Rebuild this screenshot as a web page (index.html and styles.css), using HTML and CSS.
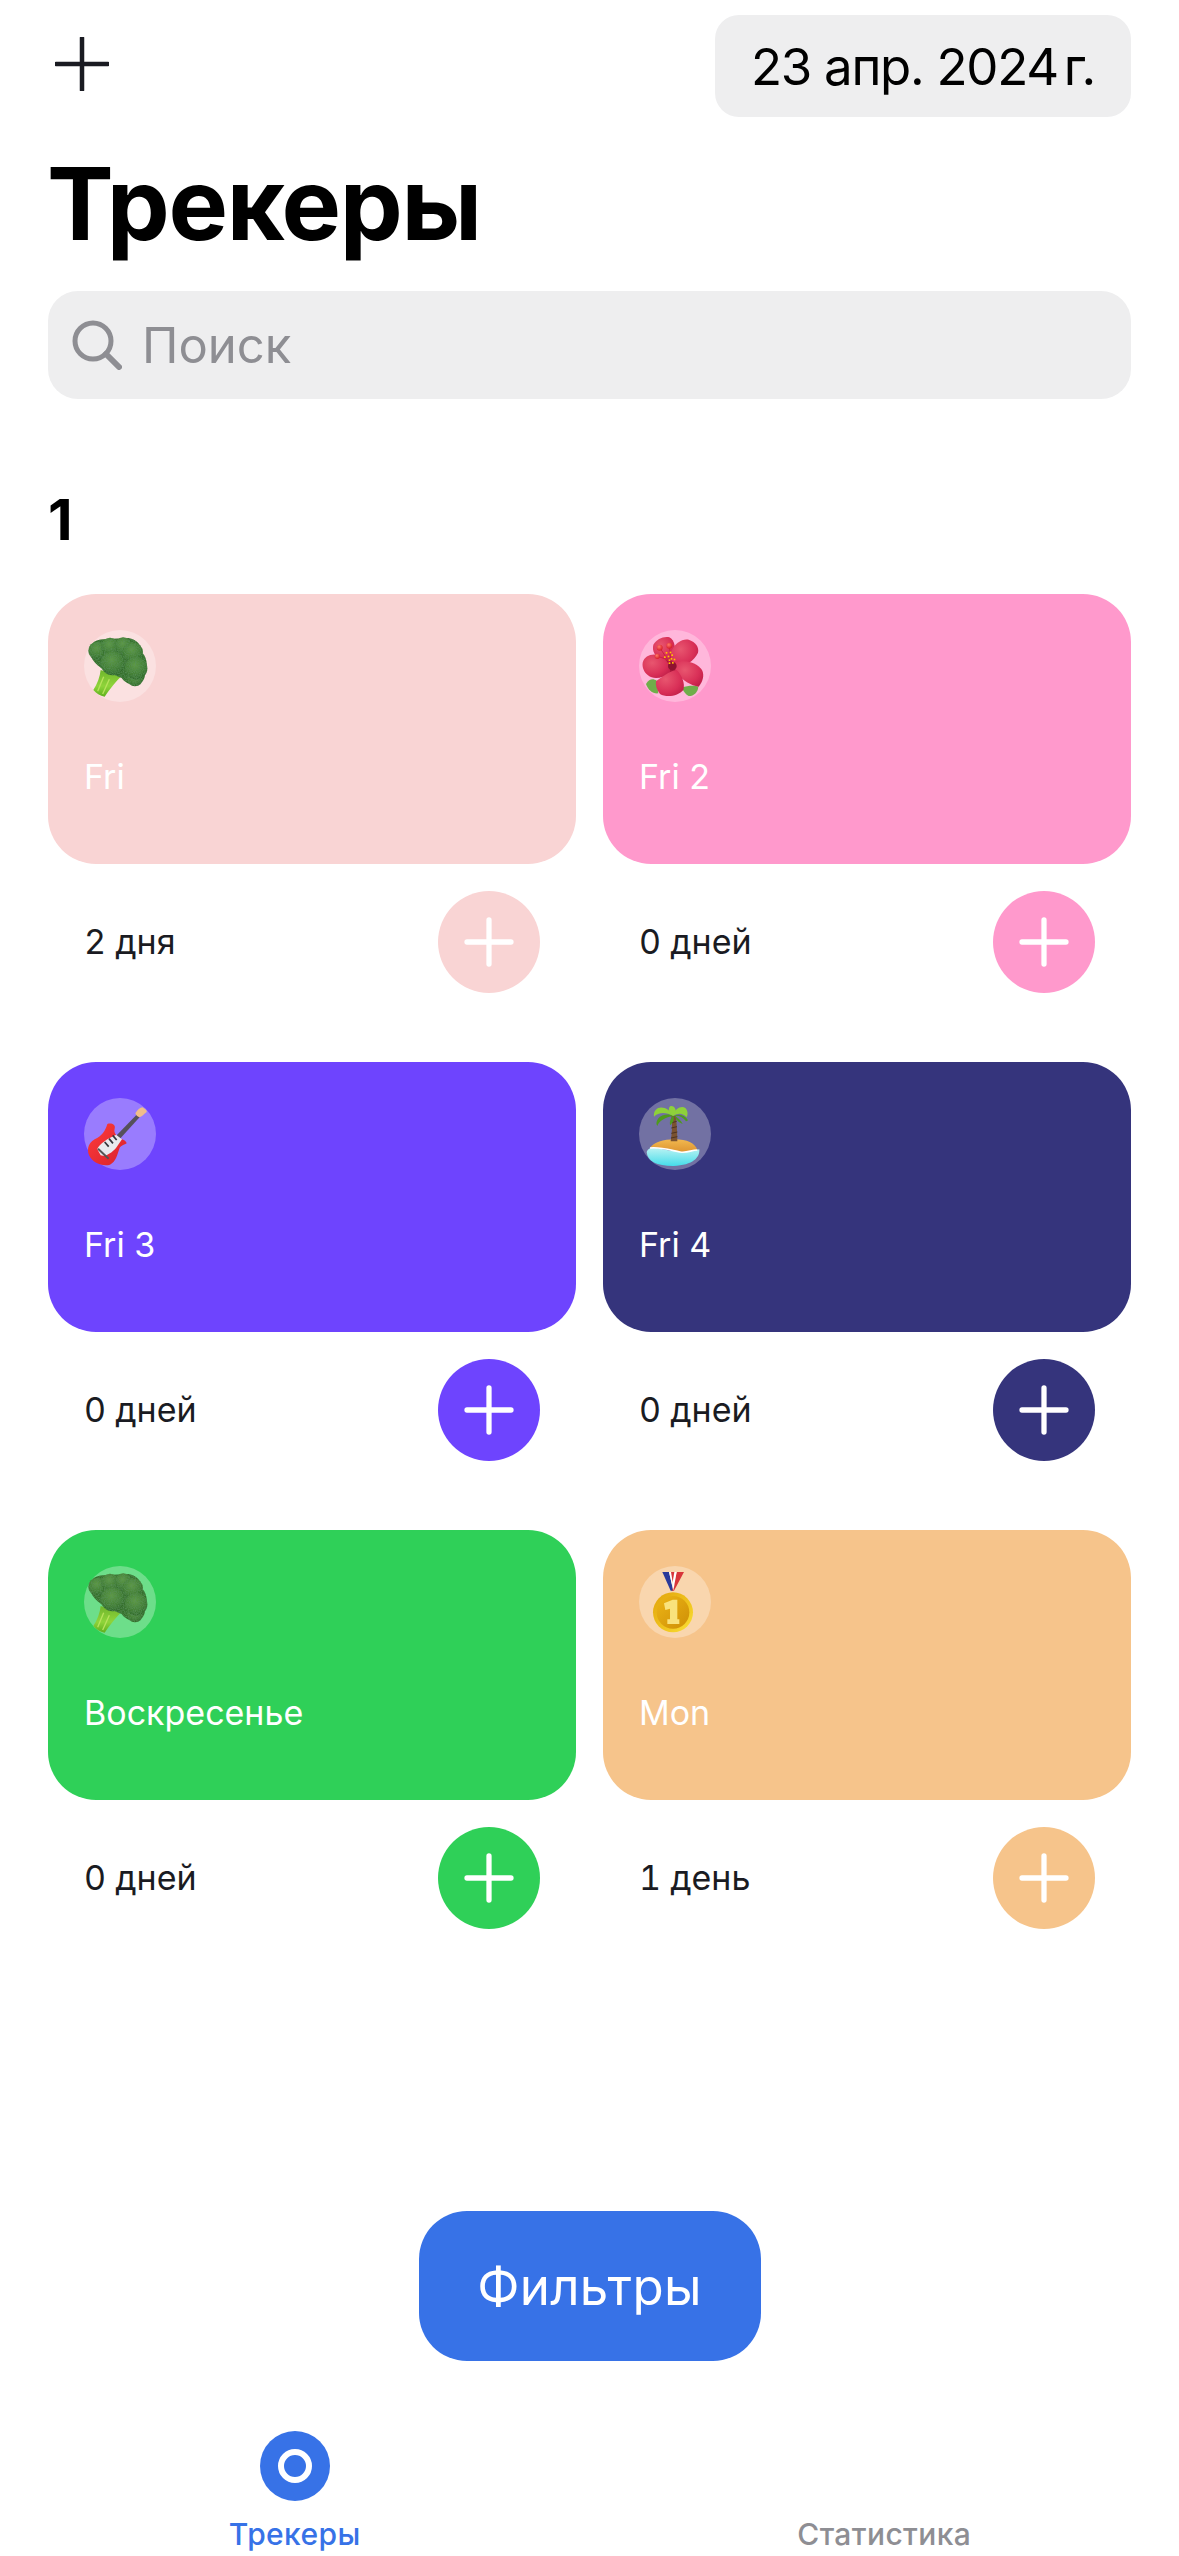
FILE: index.html
```html
<!DOCTYPE html>
<html lang="ru">
<head>
<meta charset="utf-8">
<title>Трекеры</title>
<link rel="stylesheet" href="styles.css">
</head>
<body>
<svg class="defs" width="0" height="0" aria-hidden="true">
  <defs>
    <radialGradient id="flo" cx="45%" cy="35%" r="70%"><stop offset="0" stop-color="#5f9a46"/><stop offset=".6" stop-color="#437f35"/><stop offset="1" stop-color="#2c6428"/></radialGradient>
    <linearGradient id="stem" x1="0" y1="0" x2="0" y2="1"><stop offset="0" stop-color="#6fb52c"/><stop offset=".6" stop-color="#8fd43a"/><stop offset="1" stop-color="#5fb01e"/></linearGradient>
    <filter id="bump" x="-5%" y="-5%" width="110%" height="110%"><feTurbulence type="fractalNoise" baseFrequency=".28" numOctaves="2" result="n"/><feColorMatrix in="n" type="matrix" values="0 0 0 0 0.1  0 0 0 0 0.28  0 0 0 0 0.1  0 0 0 1.6 -0.55" result="d"/><feComposite in="d" in2="SourceAlpha" operator="in" result="t"/><feMerge><feMergeNode in="SourceGraphic"/><feMergeNode in="t"/></feMerge></filter>
    <radialGradient id="pet" cx="35%" cy="35%" r="85%"><stop offset="0" stop-color="#e8566f"/><stop offset=".6" stop-color="#d92f57"/><stop offset="1" stop-color="#b81a44"/></radialGradient>
    <radialGradient id="ball" cx="40%" cy="35%" r="60%"><stop offset="0" stop-color="#ff7a6a"/><stop offset="1" stop-color="#d9232c"/></radialGradient>
    <linearGradient id="gbody" x1="0" y1="0" x2="1" y2="1"><stop offset="0" stop-color="#ff3b3b"/><stop offset="1" stop-color="#d8222c"/></linearGradient>
    <linearGradient id="sand" x1="0" y1="0" x2="0" y2="1"><stop offset="0" stop-color="#f2b84f"/><stop offset="1" stop-color="#dd9430"/></linearGradient>
    <linearGradient id="sea" x1="0" y1="0" x2="0" y2="1"><stop offset="0" stop-color="#bdf3f3"/><stop offset="1" stop-color="#45dcea"/></linearGradient>
    <linearGradient id="gold" x1="0" y1="0" x2="1" y2="1"><stop offset="0" stop-color="#e2a40e"/><stop offset=".6" stop-color="#f0c51e"/><stop offset="1" stop-color="#fbe33a"/></linearGradient>
    <linearGradient id="goldin" x1="0" y1="0" x2="1" y2="1"><stop offset="0" stop-color="#ecb516"/><stop offset="1" stop-color="#cf8f06"/></linearGradient>
    <symbol id="broccoli" viewBox="72 60 216 216">
      <path d="M122 180L182 200C170 212 150 236 134 260C120 258 108 250 100 240C112 222 120 200 122 180Z" fill="url(#stem)"/>
      <path d="M131 200L113 244M148 208L128 252" stroke="#b7e25c" stroke-width="4" fill="none"/>
      <g fill="url(#flo)" filter="url(#bump)">
        <path d="M88 120C92 98 110 88 130 88L205 84C230 88 245 105 248 130C262 145 264 175 255 192C256 210 240 226 222 224C205 224 192 214 185 204L140 185C115 170 90 150 88 120Z" fill="#356f2b"/>
        <circle cx="225" cy="205" r="24"/><circle cx="112" cy="122" r="27"/><circle cx="150" cy="110" r="27"/>
        <circle cx="190" cy="108" r="26"/><circle cx="218" cy="128" r="31"/><circle cx="228" cy="175" r="34"/>
        <circle cx="158" cy="160" r="36"/>
      </g>
    </symbol>
  </defs>
</svg>
<div class="app">
  <header class="topbar">
    <svg class="add" viewBox="0 0 54 54"><path d="M27 1V53M1 27H53" stroke="#1a1b22" stroke-width="4.5" stroke-linecap="round"/></svg>
    <div class="date">23 апр. 2024<span class="year">г.</span></div>
  </header>
  <h1 class="title">Трекеры</h1>
  <div class="search">
    <svg class="search-icon" viewBox="0 0 50 50"><circle cx="21" cy="21" r="18" fill="none" stroke="#8e8e93" stroke-width="5"/><path d="M34 34L47 47" stroke="#8e8e93" stroke-width="6" stroke-linecap="round"/></svg>
    <span class="search-text">Поиск</span>
  </div>
  <h2 class="section">1</h2>
  <main class="grid">
    <article class="tracker c-rose">
      <div class="card"><div class="emoji"><svg viewBox="0 0 72 72"><use href="#broccoli"/></svg></div><div class="name">Fri</div></div>
      <div class="foot"><span class="days">2 дня</span><span class="plus"><svg viewBox="0 0 46 46"><path d="M23 0V46M0 23H46" stroke="#fff" stroke-width="5.5" stroke-linecap="round"/></svg></span></div>
    </article>
    <article class="tracker c-pink">
      <div class="card"><div class="emoji"><svg viewBox="57 60 216 216">
        <path d="M78 222C88 205 100 205 110 212L115 250C98 252 84 240 78 222Z" fill="#6fae4a"/>
        <path d="M186 232C205 226 225 226 235 230C234 246 222 258 206 258C198 254 190 246 186 232Z" fill="#6fae4a"/>
        <circle cx="157" cy="170" r="42" fill="#a9163c"/>
        <path d="M100 104C110 88 130 78 148 82C164 90 170 116 160 150C140 156 116 148 104 132C98 122 98 112 100 104Z" fill="url(#pet)"/>
        <path d="M156 120C166 98 190 84 208 90C226 96 238 112 234 128C222 152 196 172 162 172C152 152 150 136 156 120Z" fill="url(#pet)"/>
        <path d="M68 158C74 136 100 128 120 138C140 148 154 168 150 186C130 206 100 210 84 196C72 186 66 172 68 158Z" fill="url(#pet)"/>
        <path d="M166 158C200 146 232 160 246 180C254 196 248 216 236 230C214 228 186 210 170 190C164 178 164 168 166 158Z" fill="url(#pet)"/>
        <path d="M108 214C124 202 150 182 170 180C186 196 196 220 190 240C176 258 140 264 120 252C110 240 106 226 108 214Z" fill="url(#pet)"/>
        <circle cx="157" cy="168" r="13" fill="#8f1230"/>
        <path d="M150 160L120 114M152 150L148 108M140 148L113 139" stroke="#c81f45" stroke-width="3"/>
        <circle cx="119" cy="113" r="9" fill="url(#ball)"/><circle cx="148" cy="107" r="9" fill="url(#ball)"/><circle cx="112" cy="139" r="8" fill="url(#ball)"/>
        <g fill="#ffc400"><rect x="137" y="126" width="5" height="5"/><rect x="149" y="125" width="5" height="5"/><rect x="154" y="133" width="5" height="5"/><rect x="132" y="139" width="5" height="5"/><rect x="143" y="137" width="5" height="5"/><rect x="152" y="144" width="5" height="5"/><rect x="161" y="146" width="5" height="5"/><rect x="146" y="148" width="5" height="5"/><rect x="156" y="156" width="5" height="5"/><rect x="146" y="157" width="5" height="5"/></g>
      </svg></div><div class="name">Fri 2</div></div>
      <div class="foot"><span class="days">0 дней</span><span class="plus"><svg viewBox="0 0 46 46"><path d="M23 0V46M0 23H46" stroke="#fff" stroke-width="5.5" stroke-linecap="round"/></svg></span></div>
    </article>
    <article class="tracker c-purple">
      <div class="card"><div class="emoji"><svg viewBox="72 54 216 216">
        <path d="M170 166L232 102L240 110L180 176Z" fill="#55505a"/>
        <path d="M226 100C232 90 240 82 248 82C252 86 262 90 260 96C252 102 246 110 238 112C232 110 228 106 226 100Z" fill="#f0bd8a"/>
        <path d="M142 132C152 128 168 132 164 146C160 158 170 168 182 176C190 178 200 184 200 190C190 196 180 198 178 206C172 224 168 244 150 254C130 260 104 250 92 234C78 216 82 190 104 178C126 168 136 152 142 132Z" fill="url(#gbody)"/>
        <path d="M168 164L186 178L168 204C156 218 136 232 122 226L112 208C116 196 128 188 142 178C150 172 160 170 168 164Z" fill="#e9e9ee"/>
        <g stroke="#33333a" stroke-width="5"><path d="M134 186L146 200"/><path d="M147 176L159 190"/><path d="M158 166L170 180"/></g>
        <path d="M114 206L146 236" stroke="#555" stroke-width="6"/>
      </svg></div><div class="name">Fri 3</div></div>
      <div class="foot"><span class="days">0 дней</span><span class="plus"><svg viewBox="0 0 46 46"><path d="M23 0V46M0 23H46" stroke="#fff" stroke-width="5.5" stroke-linecap="round"/></svg></span></div>
    </article>
    <article class="tracker c-navy">
      <div class="card"><div class="emoji"><svg viewBox="57 54 216 216">
        <path d="M80 216C84 204 96 200 110 204C150 214 200 218 238 208C240 232 220 256 160 258C110 258 82 244 80 216Z" fill="url(#sea)"/>
        <path d="M90 204C100 188 130 178 165 178C200 178 226 190 232 210C214 210 200 220 180 216C150 210 118 200 90 204Z" fill="url(#sand)"/>
        <path d="M90 204C118 200 150 210 180 216C200 220 214 210 232 210" fill="none" stroke="#fff" stroke-width="5"/>
        <path d="M154 108C160 108 165 108 168 110C170 132 172 160 172 184L152 184C156 160 158 132 154 108Z" fill="#7a5230"/>
        <path d="M156 128L170 124M154 144L171 140M154 160L172 156M153 174L172 170" stroke="#4d3320" stroke-width="3"/>
        <g fill="#4e9a1c"><path d="M160 108C146 100 124 104 114 116C108 126 108 132 112 138C118 122 136 112 160 108Z"/><path d="M160 108C176 100 194 106 202 118C204 122 204 124 198 124C190 112 178 106 160 108Z"/><path d="M160 106C152 114 148 124 150 136C160 128 164 118 160 106Z"/><path d="M164 106C172 114 184 122 188 132C176 128 166 118 164 106Z"/></g>
        <g fill="#8ed13a"><path d="M160 108C150 88 130 78 114 84C104 90 100 100 102 110C116 96 138 96 160 108Z"/><path d="M160 108C164 86 184 76 196 84C204 92 204 104 200 112C188 98 174 98 160 108Z"/><path d="M160 108C146 98 142 84 152 78C162 76 168 86 168 98Z"/></g>
      </svg></div><div class="name">Fri 4</div></div>
      <div class="foot"><span class="days">0 дней</span><span class="plus"><svg viewBox="0 0 46 46"><path d="M23 0V46M0 23H46" stroke="#fff" stroke-width="5.5" stroke-linecap="round"/></svg></span></div>
    </article>
    <article class="tracker c-green">
      <div class="card"><div class="emoji"><svg viewBox="0 0 72 72"><use href="#broccoli"/></svg></div><div class="name">Воскресенье</div></div>
      <div class="foot"><span class="days">0 дней</span><span class="plus"><svg viewBox="0 0 46 46"><path d="M23 0V46M0 23H46" stroke="#fff" stroke-width="5.5" stroke-linecap="round"/></svg></span></div>
    </article>
    <article class="tracker c-orange">
      <div class="card"><div class="emoji"><svg viewBox="57 48 216 216">
        <path d="M127 66H147L160 122H152Z" fill="#2a3a9a"/><path d="M192 66H170L156 122H162Z" fill="#d8353a"/><path d="M147 66H156L158 106L160 122Z" fill="#fff"/><path d="M160 66H170L160 122L158 100Z" fill="#fff"/><path d="M153 66H163L158 96Z" fill="#d8353a"/>
        <circle cx="159" cy="187" r="60" fill="url(#gold)"/>
        <circle cx="159" cy="187" r="49" fill="url(#goldin)"/>
        <path d="M132 160L158 149H172V208H178V222H142V208H150V176L136 180Z" fill="#f9e27c"/>
      </svg></div><div class="name">Mon</div></div>
      <div class="foot"><span class="days">1 день</span><span class="plus"><svg viewBox="0 0 46 46"><path d="M23 0V46M0 23H46" stroke="#fff" stroke-width="5.5" stroke-linecap="round"/></svg></span></div>
    </article>
  </main>
  <div class="filter-wrap"><button class="filter">Фильтры</button></div>
  <nav class="tabs">
    <div class="tab active">
      <svg class="tab-icon" viewBox="0 0 70 70"><circle cx="35" cy="35" r="35" fill="#3772e7"/><circle cx="35" cy="35" r="14" fill="none" stroke="#fff" stroke-width="6"/></svg>
      <span class="tab-label">Трекеры</span>
    </div>
    <div class="tab">
      <span class="tab-icon"></span>
      <span class="tab-label">Статистика</span>
    </div>
  </nav>
</div>
</body>
</html>
```
FILE: styles.css
```css
* { box-sizing: border-box; }
html, body { margin: 0; padding: 0; background: #fff; }
body { width: 1179px; height: 2556px; overflow: hidden; font-family: Inter, "Liberation Sans", sans-serif; color: #1a1b22; }
.defs { position: absolute; }
.app { width: 1179px; height: 2556px; display: flex; flex-direction: column; padding: 15px 48px 0; }

.topbar { display: flex; justify-content: space-between; align-items: center; height: 102px; }
.add { width: 54px; height: 54px; margin-left: 7px; margin-top: -4px; }
.date { height: 102px; width: 416px; background: #eeeeef; border-radius: 24px; display: flex; align-items: center; justify-content: center; font-size: 51px; color: #000; letter-spacing: -1.3px; }
.year { margin-left: 6px; }

.title { margin: 37px 0 0 -1px; font-size: 100px; line-height: 100px; font-weight: 700; color: #000; letter-spacing: -1.3px; }

.search { margin-top: 37px; height: 108px; background: #eeeeef; border-radius: 30px; display: flex; align-items: center; padding-left: 24px; gap: 20px; }
.search-icon { width: 50px; height: 50px; }
.search-text { font-size: 49px; color: #8e8e93; }

.section { margin: 86px 0 0; font-size: 57px; line-height: 70px; font-weight: 700; color: #000; }

.grid { margin-top: 39px; display: grid; grid-template-columns: 528px 528px; column-gap: 27px; row-gap: 48px; }
.tracker { height: 420px; }
.card { height: 270px; border-radius: 48px; padding: 36px 36px 0; color: #fff; }
.emoji { width: 72px; height: 72px; border-radius: 50%; background: rgba(255,255,255,.3); }
.emoji svg { display: block; width: 72px; height: 72px; }
.name { margin-top: 53px; font-size: 34px; line-height: 44px; font-weight: 400; }
.foot { height: 150px; padding: 27px 36px 0; display: flex; justify-content: space-between; align-items: flex-start; }
.days { font-size: 34px; line-height: 102px; color: #1a1b22; font-variant-numeric: tabular-nums; }
.plus { width: 102px; height: 102px; border-radius: 50%; display: flex; align-items: center; justify-content: center; }
.plus svg { width: 44px; height: 44px; overflow: visible; }

.c-rose .card, .c-rose .plus { background: #f9d4d4; }
.c-pink .card, .c-pink .plus { background: #ff99cc; }
.c-purple .card, .c-purple .plus { background: #6e44fe; }
.c-navy .card, .c-navy .plus { background: #35347c; }
.c-green .card, .c-green .plus { background: #2fd058; }
.c-orange .card, .c-orange .plus { background: #f6c48b; }

.filter-wrap { margin-top: auto; display: flex; justify-content: center; }
.filter { width: 342px; height: 150px; border: 0; border-radius: 48px; background: #3772e7; color: #fff; font-family: inherit; font-size: 51px; padding: 0; letter-spacing: .3px; }

.tabs { margin: 70px -48px 0; height: 125px; display: grid; grid-template-columns: 1fr 1fr; }
.tab { display: flex; flex-direction: column; align-items: center; color: #8e8e93; }
.tab.active { color: #3772e7; }
.tab-icon { width: 70px; height: 70px; display: block; }
.tab-label { margin-top: 14px; font-size: 30px; line-height: 38px; font-weight: 500; letter-spacing: .4px; }
```
